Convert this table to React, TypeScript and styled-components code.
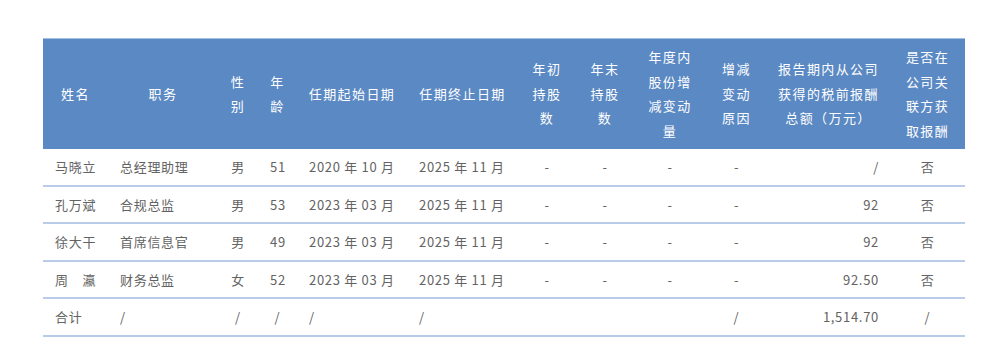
import React from "react";
import styled, { createGlobalStyle } from "styled-components";

const GlobalStyle = createGlobalStyle`
  html, body {
    margin: 0;
    padding: 0;
    background: #ffffff;
  }
  body {
    font-family: "Noto Sans CJK SC", "Noto Sans", sans-serif;
  }
`;

const Page = styled.div`
  padding: 38px 0 0 43px;
`;

const Table = styled.table`
  width: 922px;
  border-collapse: collapse;
  table-layout: fixed;
  border-top: 1px solid #a3bfe3;
`;

const Col = styled.col<{ $w: number }>`
  width: ${(p) => p.$w}px;
`;

const HeadCell = styled.th`
  height: 110px;
  padding: 0;
  background: #5b89c3;
  color: #ffffff;
  font-size: 13px;
  font-weight: 400;
  line-height: 24.5px;
  letter-spacing: 1.4px;
  text-align: center;
  vertical-align: middle;
`;

const Row = styled.tr`
  border-bottom: 2px solid #b9cbe8;
`;

const Cell = styled.td<{ $align?: "left" | "center" | "right" }>`
  height: 35.5px;
  padding: 0 ${(p) => (p.$align === "right" ? "11px" : "12px")};
  color: #636363;
  font-size: 13px;
  letter-spacing: 0.7px;
  text-align: ${(p) => p.$align ?? "left"};
  vertical-align: middle;
  white-space: nowrap;
`;

const widths = [65, 110, 40, 39, 110, 111, 58, 58, 72, 61, 123, 75];

const headers = [
  ["姓名"],
  ["职务"],
  ["性", "别"],
  ["年", "龄"],
  ["任期起始日期"],
  ["任期终止日期"],
  ["年初", "持股", "数"],
  ["年末", "持股", "数"],
  ["年度内", "股份增", "减变动", "量"],
  ["增减", "变动", "原因"],
  ["报告期内从公司", "获得的税前报酬", "总额（万元）"],
  ["是否在", "公司关", "联方获", "取报酬"],
];

const aligns: ("left" | "center" | "right")[] = [
  "left",
  "left",
  "center",
  "center",
  "left",
  "left",
  "center",
  "center",
  "center",
  "center",
  "right",
  "center",
];

const rows = [
  ["马晓立", "总经理助理", "男", "51", "2020 年 10 月", "2025 年 11 月", "-", "-", "-", "-", "/", "否"],
  ["孔万斌", "合规总监", "男", "53", "2023 年 03 月", "2025 年 11 月", "-", "-", "-", "-", "92", "否"],
  ["徐大干", "首席信息官", "男", "49", "2023 年 03 月", "2025 年 11 月", "-", "-", "-", "-", "92", "否"],
  ["周　瀛", "财务总监", "女", "52", "2023 年 03 月", "2025 年 11 月", "-", "-", "-", "-", "92.50", "否"],
  ["合计", "/", "/", "/", "/", "/", "", "", "", "/", "1,514.70", "/"],
];

export default function App() {
  return (
    <>
      <GlobalStyle />
      <Page>
        <Table>
          <colgroup>
            {widths.map((w, i) => (
              <Col key={i} $w={w} />
            ))}
          </colgroup>
          <thead>
            <tr>
              {headers.map((lines, i) => (
                <HeadCell key={i}>
                  {lines.map((l, j) => (
                    <div key={j}>{l}</div>
                  ))}
                </HeadCell>
              ))}
            </tr>
          </thead>
          <tbody>
            {rows.map((row, idx) => (
              <Row key={idx}>
                {row.map((v, i) => (
                  <Cell key={i} $align={aligns[i]}>
                    {v}
                  </Cell>
                ))}
              </Row>
            ))}
          </tbody>
        </Table>
      </Page>
    </>
  );
}
